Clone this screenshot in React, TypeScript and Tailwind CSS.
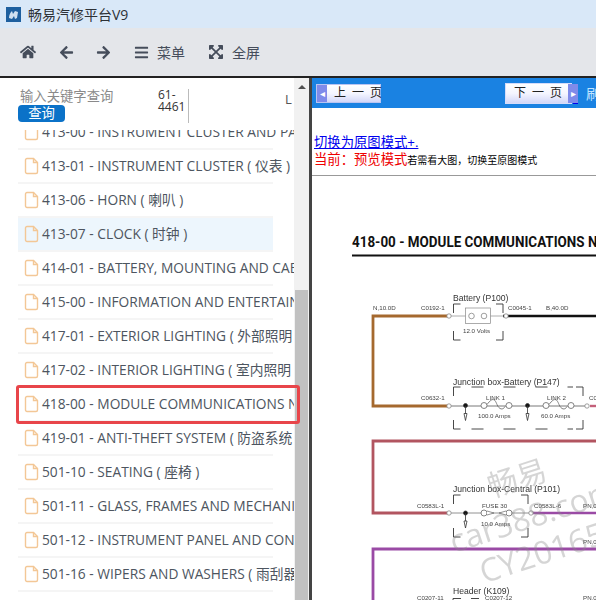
import React from "react";
import { FaHome, FaArrowLeft, FaArrowRight, FaBars, FaExpandArrowsAlt } from "react-icons/fa";

const rows = [
  "413-00 - INSTRUMENT CLUSTER AND PANEL",
  "413-01 - INSTRUMENT CLUSTER ( 仪表 )",
  "413-06 - HORN ( 喇叭 )",
  "413-07 - CLOCK ( 时钟 )",
  "414-01 - BATTERY, MOUNTING AND CABLES ( 蓄电池 )",
  "415-00 - INFORMATION AND ENTERTAINMENT SYSTEM",
  "417-01 - EXTERIOR LIGHTING ( 外部照明 )",
  "417-02 - INTERIOR LIGHTING ( 室内照明 )",
  "418-00 - MODULE COMMUNICATIONS NETWORK",
  "419-01 - ANTI-THEFT SYSTEM ( 防盗系统 )",
  "501-10 - SEATING ( 座椅 )",
  "501-11 - GLASS, FRAMES AND MECHANISMS",
  "501-12 - INSTRUMENT PANEL AND CONSOLE",
  "501-16 - WIPERS AND WASHERS ( 雨刮器 )",
];

function FileIcon() {
  return (
    <svg width="16" height="18" viewBox="0 0 16 18" fill="none" stroke="#f3c796" strokeWidth="1.4" className="shrink-0">
      <path d="M3 1.5h6.5l4 4V15a1.5 1.5 0 0 1-1.5 1.5H3A1.5 1.5 0 0 1 1.5 15V3A1.5 1.5 0 0 1 3 1.5z" />
      <path d="M9.5 1.5v4h4" />
    </svg>
  );
}

function PageButton({ label, dir }: { label: string; dir: "prev" | "next" }) {
  const arrow = (
    <span className="flex h-full w-[10px] shrink-0 items-center justify-center bg-[#7f8bea] text-[10px] leading-none text-white">
      {dir === "prev" ? "◂" : "▸"}
    </span>
  );
  return (
    <div className={`flex shrink-0 items-center border bg-gradient-to-b from-[#ffffff] via-[#f4f5ff] to-[#d3d7f8] text-[12px] leading-none text-[#222] ${dir === "prev" ? "h-[19px] w-[65px] border-[#b9c4f2]" : "h-[21px] w-[67px] border-[#d5dcfa]"}`}>
      {dir === "prev" && arrow}
      <span className={`flex-1 whitespace-nowrap tracking-[6px] ${dir === "prev" ? "pl-[7px]" : "pl-[8px]"}`}>{label}</span>
      {dir === "next" && arrow}
    </div>
  );
}

function Bracket({ x1, y1, x2, y2, dashed }: { x1: number; y1: number; x2: number; y2: number; dashed?: boolean }) {
  return (
    <g fill="none" stroke="#333" strokeWidth="0.9">
      <path d={`M${x1} ${y1 + 9}V${y1}H${x1 + 7}`} />
      <path d={`M${x2 - 7} ${y1}H${x2}V${y1 + 9}`} />
      <path d={`M${x1} ${y2 - 9}V${y2}H${x1 + 7}`} />
      <path d={`M${x2 - 7} ${y2}H${x2}V${y2 - 9}`} />
      {dashed && <path d={`M${x1 + 18} ${y1}H${x2 - 10}M${x1 + 18} ${y2}H${x2 - 10}`} strokeDasharray="12 20" />}
    </g>
  );
}

function Connector({ x, y }: { x: number; y: number }) {
  return <circle cx={x} cy={y} r="2.2" fill="#fff" stroke="#888" strokeWidth="0.8" />;
}

function Ground({ x, y }: { x: number; y: number }) {
  return (
    <g stroke="#333" strokeWidth="0.8" fill="none">
      <circle cx={x} cy={y} r="2" fill="#111" />
      <path d={`M${x} ${y}v8`} />
      <path d={`M${x - 1.5} ${y + 8}h3l-1.5 7z`} />
    </g>
  );
}

function Link({ x, y }: { x: number; y: number }) {
  return (
    <g stroke="#666" strokeWidth="0.8" fill="#fff">
      <circle cx={x} cy={y} r="3" />
      <path d={`M${x + 3} ${y - 1}c6 -8 8 -5 10 0s6 6 8 2`} fill="none" />
      <circle cx={x + 25} cy={y} r="3" />
    </g>
  );
}

function Diagram() {
  return (
    <svg viewBox="312 176 284 424" width="284" height="424" className="block">
      <text x="352" y="247" fontSize="14.5" fontWeight="700" fill="#111" fontFamily="'Roboto','Liberation Sans',sans-serif" textLength="253" lengthAdjust="spacingAndGlyphs">418-00 - MODULE COMMUNICATIONS NE</text>
      <rect x="352" y="254.5" width="244" height="2" fill="#111" />

      <g className="blur-[0.3px]">
        <path d="M449 316H373V406H449" fill="none" stroke="#a5692e" strokeWidth="2.8" />
        <path d="M503 316H596" stroke="#111" strokeWidth="2.4" />
        <path d="M590 406H596" stroke="#c4607a" strokeWidth="2.4" />
        <path d="M596 441H373V513H449" fill="none" stroke="#b25560" strokeWidth="2.8" />
        <path d="M533 513H596" stroke="#9a4aa5" strokeWidth="2.4" />
        <path d="M596 549H373V600" fill="none" stroke="#9a4aa5" strokeWidth="2.8" />

        <g fontFamily="'Liberation Sans',sans-serif" fill="#444" fontSize="6.2">
          <text x="373" y="310">N,10.0D</text>
          <text x="421" y="310">C0192-1</text>
          <text x="508" y="310">C0045-1</text>
          <text x="546" y="310">B,40.0D</text>
          <text x="463" y="333">12.0 Volts</text>
          <text x="421" y="399.5">C0632-1</text>
          <text x="589" y="399.5">C0</text>
          <text x="486" y="399.5">LINK 1</text>
          <text x="547" y="399.5">LINK 2</text>
          <text x="478" y="417.5">100.0 Amps</text>
          <text x="541" y="417.5">60.0 Amps</text>
          <text x="417" y="507.5">C0583L-1</text>
          <text x="482" y="507.5">FUSE 30</text>
          <text x="481" y="525.5">10.0 Amps</text>
          <text x="534" y="507.5">C0583L-6</text>
          <text x="583" y="507.5">PN,0</text>
          <text x="583" y="543.5">PN,0</text>
          <text x="417" y="600">C0207-11</text>
          <text x="485" y="600">C0207-12</text>
          <text x="583" y="600">PN,0</text>
        </g>
        <g fontFamily="'Liberation Sans',sans-serif" fill="#333" fontSize="8.6">
          <text x="453" y="301">Battery (P100)</text>
          <text x="453" y="385">Junction box-Battery (P147)</text>
          <text x="453" y="492">Junction box-Central (P101)</text>
          <text x="453" y="594">Header (K109)</text>
        </g>

        <path d="M449 316H503" stroke="#999" strokeWidth="0.8" />
        <rect x="465.5" y="308" width="25" height="15.5" fill="#fff" stroke="#888" strokeWidth="0.7" />
        <circle cx="471.5" cy="316" r="2.8" fill="#fff" stroke="#777" strokeWidth="0.7" />
        <circle cx="484" cy="316" r="2.8" fill="#fff" stroke="#777" strokeWidth="0.7" />
        <Connector x={449} y={316} />
        <Connector x={506} y={316} />
        <Bracket x1={453.5} y1={304} x2={503} y2={340} />

        <path d="M449 406H586" stroke="#555" strokeWidth="0.8" />
        <Connector x={449} y={406} />
        <Connector x={587} y={406} />
        <Ground x={465.5} y={405.5} />
        <Ground x={527.5} y={405.5} />
        <Link x={484} y={405.5} />
        <Link x={546} y={405.5} />
        <Bracket x1={453.5} y1={387} x2={583} y2={429} dashed />

        <path d="M449 513H531" stroke="#777" strokeWidth="0.8" />
        <Connector x={449} y={513} />
        <Connector x={531} y={513} />
        <Ground x={465.5} y={513} />
        <circle cx="484" cy="513" r="3" fill="#fff" stroke="#666" strokeWidth="0.8" />
        <circle cx="509" cy="513" r="3" fill="#fff" stroke="#666" strokeWidth="0.8" />
        <path d="M487 511l7 2 -7 2M506 511l-7 2 7 2" fill="#fff" stroke="#666" strokeWidth="0.7" />
        <Bracket x1={453.5} y1={495} x2={528} y2={537} />
        <path d="M453 598.5v1.5M453 598.5h8M479 598.5h-8" stroke="#333" strokeWidth="0.9" fill="none" />
      </g>
    </svg>
  );
}

export default function App() {
  return (
    <div className="flex h-[600px] w-[596px] flex-col overflow-hidden bg-white font-['Open_Sans','Noto_Sans_CJK_SC',sans-serif]">
      {/* title bar */}
      <div className="flex h-[28px] shrink-0 items-center gap-[7px] bg-[#d9e8f8] pl-[6px] text-[14px] text-[#2d3136]">
        <svg width="15" height="15" viewBox="0 0 15 15">
          <rect width="15" height="15" fill="#1d5f9f" />
          <path d="M3 11c0-3 1-5 3-7l1 3 2-3 3 1-1 6-2 1-1-3-2 3z" fill="#cfe0f0" />
        </svg>
        <span>畅易汽修平台V9</span>
      </div>

      {/* toolbar */}
      <div className="flex h-[48px] shrink-0 items-center bg-[#e4e6ea] pl-[20px] text-[14px] text-[#454d5b]">
        <FaHome className="text-[16px]" />
        <FaArrowLeft className="ml-[23px] text-[15px]" />
        <FaArrowRight className="ml-[22px] text-[15px]" />
        <FaBars className="ml-[23px] text-[15px]" />
        <span className="ml-[8px]">菜单</span>
        <FaExpandArrowsAlt className="ml-[23px] text-[16px]" />
        <span className="ml-[8px]">全屏</span>
      </div>
      <div className="h-[2px] shrink-0 bg-[#222]" />

      <div className="relative flex min-h-0 flex-1">
        {/* left panel */}
        <div className="flex w-[294px] shrink-0 flex-col overflow-hidden">
          <div className="relative z-10 flex h-[52px] shrink-0 bg-white">
            <div className="w-[158px] shrink-0 pl-[18px]">
              <div className="mt-[9px] pl-[2px] text-[13.33px] leading-[18px] text-[#8a8a8a]">输入关键字查询</div>
              <div className="flex h-[17px] w-[47px] items-center justify-center rounded-[4px] bg-[#0b72c8] text-[13.33px] text-white">查询</div>
            </div>
            <div className="mt-[11px] h-[34px] w-[31px] border-r border-[#bbb] text-[12px] leading-[11.5px] text-[#333]">
              61-
              <br />
              4461
            </div>
            <div className="ml-[96px] mt-[12px] text-[13px] leading-[18px] text-[#555]">L</div>
          </div>
          <div className="-mt-[14px] flex flex-col pl-[18px]">
            {rows.map((r, i) => (
              <div
                key={r}
                className={`flex h-[34px] w-[255px] shrink-0 items-center gap-[2px] whitespace-nowrap border-b-2 border-[#f5f5f5] pl-[6px] text-[13.75px] text-[#4d5560] ${i === 3 ? "bg-[#edf6fd]" : ""}`}
              >
                <FileIcon />
                <span>{r}</span>
              </div>
            ))}
          </div>
        </div>

        {/* scrollbar */}
        <div className="flex w-[15px] shrink-0 flex-col items-center bg-[#f1f1f1]">
          <div className="mt-[7px] h-0 w-0 border-x-[4px] border-b-[4px] border-x-transparent border-b-[#505050]" />
          <div className="mt-[201px] h-full w-[13px] bg-[#c1c1c1]" />
        </div>
        <div className="w-[3px] shrink-0 bg-[#444]" />

        {/* right panel */}
        <div className="min-w-0 flex-1 overflow-hidden bg-white">
          <div className="flex h-[30px] items-center bg-[#1a82e2] pl-[4px]">
            <PageButton label="上一页" dir="prev" />
            <div className="ml-[124px] flex shrink-0 items-end">
              <PageButton label="下一页" dir="next" />
              <span className="ml-[1px] w-[5px] border-b border-[#0000ee]" />
            </div>
            <span className="ml-[8px] shrink-0 whitespace-nowrap text-[14px] text-[#bfe3ff]">刷新</span>
          </div>
          <div className="mt-[25px] pl-[2px] text-[13.33px] leading-[18px] whitespace-nowrap text-[#0000ee] underline">切换为原图模式+.</div>
          <div className="whitespace-nowrap pl-[2px] text-[13.33px] leading-[17px] text-[#ee0000]">
            当前：预览模式<span className="text-[10px] text-black">若需看大图，切换至原图模式</span>
          </div>
          <div className="mt-[6px] h-[1px] bg-[#999]" />
          <Diagram />
        </div>

        {/* highlight */}
        <div className="absolute left-[16px] top-[307px] h-[39px] w-[284px] rounded-[3px] border-[3px] border-[#e8454a]" />

        {/* watermark */}
        <div className="pointer-events-none absolute left-[487px] top-[385px] -rotate-[18deg] text-[30px] leading-none whitespace-nowrap text-[#8a8a8a] opacity-35">畅易</div>
        <div className="pointer-events-none absolute left-[446px] top-[421px] -rotate-[18deg] text-[32px] leading-none whitespace-nowrap text-[#8a8a8a] opacity-35">car388.com</div>
        <div className="pointer-events-none absolute left-[477px] top-[458px] -rotate-[18deg] text-[32px] leading-none whitespace-nowrap text-[#8a8a8a] opacity-35">CY20165</div>
      </div>
    </div>
  );
}
